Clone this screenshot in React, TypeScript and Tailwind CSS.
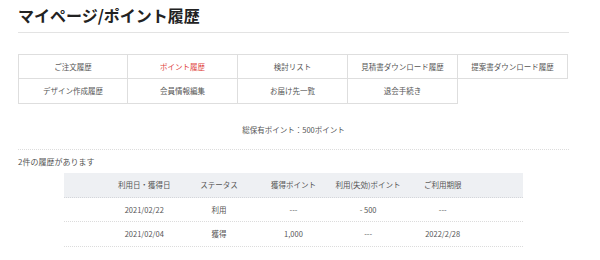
import * as React from 'react';

const navItems = [
  { label: 'ご注文履歴' },
  { label: 'ポイント履歴', active: true },
  { label: '検討リスト' },
  { label: '見積書ダウンロード履歴' },
  { label: '提案書ダウンロード履歴' },
  { label: 'デザイン作成履歴' },
  { label: '会員情報編集' },
  { label: 'お届け先一覧' },
  { label: '退会手続き' },
];

const rows = [
  ['2021/02/22', '利用', '---', '- 500', '---'],
  ['2021/02/04', '獲得', '1,000', '---', '2022/2/28'],
];

export default function App() {
  return (
    <div
      className="w-[600px] h-[260px] overflow-hidden bg-white text-[#444]"
      style={{ fontFamily: '"Noto Sans CJK JP", "Noto Sans", sans-serif' }}
    >
      <div className="ml-[18px] w-[551px]">
        {/* Title */}
        <div className="pt-[5px] pb-[7px] border-b border-[#e3e3e3]">
          <h1 className="text-[16px] leading-[20px] font-bold text-[#222]">
            マイページ/ポイント履歴
          </h1>
        </div>

        {/* Nav grid */}
        <div className="mt-[21px] grid grid-cols-[repeat(5,110px)]">
          {navItems.map((item, i) => (
            <div
              key={item.label}
              className={`h-[25px] flex items-center justify-center text-[7.5px] border-b border-r border-[#dedede] ${
                i < 5 ? 'border-t' : ''
              } ${i % 5 === 0 ? 'border-l' : ''} ${
                item.active ? 'text-[#e0443c]' : 'text-[#555]'
              }`}
            >
              {item.label}
            </div>
          ))}
        </div>

        {/* Total points */}
        <div className="pt-[20px] pb-[13px] border-b border-dotted border-[#dcdcdc] text-center text-[7.5px] leading-[12px] text-[#555]">
          総保有ポイント：500ポイント
        </div>

        <p className="mt-[6px] text-[8px] leading-[12px] text-[#555]">
          2件の履歴があります
        </p>

        {/* History table */}
        <div className="mt-[5px] ml-[46px] w-[459px] text-[7.5px] text-[#555]">
          <div className="h-[25px] bg-[#eef0f3] border-b border-dotted border-[#d4d6da] px-[43px] grid grid-cols-5 items-center text-center">
            <span>利用日・獲得日</span>
            <span>ステータス</span>
            <span>獲得ポイント</span>
            <span>利用(失効)ポイント</span>
            <span>ご利用期限</span>
          </div>
          {rows.map((r, i) => (
            <div
              key={i}
              className={`${
                i === 0 ? 'h-[24px]' : 'h-[25px]'
              } border-b border-dotted border-[#dcdcdc] px-[43px] grid grid-cols-5 items-center text-center`}
            >
              {r.map((c, j) => (
                <span key={j}>{c}</span>
              ))}
            </div>
          ))}
        </div>
      </div>
    </div>
  );
}
